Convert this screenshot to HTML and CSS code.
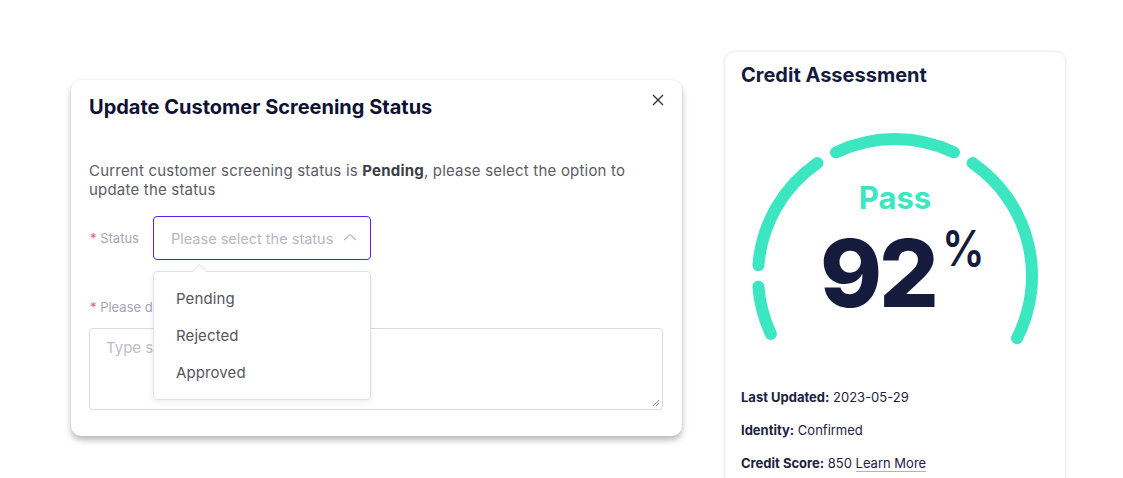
FILE: index.html
```html
<!DOCTYPE html>
<html lang="en">
<head>
<meta charset="utf-8">
<title>Screening</title>
<link rel="stylesheet" href="styles.css">
</head>
<body>
<div class="page">
  <section class="modal">
    <h2 class="modal-title">Update Customer Screening Status</h2>
    <button class="close" aria-label="Close">
      <svg width="12" height="12" viewBox="0 0 12 12"><path d="M1 1L11 11M11 1L1 11" stroke="#2b2d3a" stroke-width="1.3" fill="none"/></svg>
    </button>
    <p class="intro">Current customer screening status is <b>Pending</b>, please select the option to update the status</p>
    <div class="row">
      <label class="label"><span class="req">*</span> Status</label>
      <div class="select-wrap">
        <div class="select">
          <span class="placeholder">Please select the status</span>
          <svg class="chev" width="14" height="8" viewBox="0 0 14 8"><path d="M1 7L7 1.5L13 7" stroke="#b9b9c8" stroke-width="1.2" fill="none"/></svg>
        </div>
        <ul class="menu">
          <li>Pending</li>
          <li>Rejected</li>
          <li>Approved</li>
        </ul>
      </div>
    </div>
    <label class="label desc-label"><span class="req">*</span> Please describe the reason</label>
    <div class="textarea">
      <span class="placeholder">Type something here</span>
      <svg class="grip" width="8" height="8" viewBox="0 0 8 8"><path d="M7 1L1 7M7 4L4 7" stroke="#8c8c96" stroke-width="1" fill="none"/></svg>
    </div>
  </section>

  <section class="card">
    <h2 class="card-title">Credit Assessment</h2>
    <div class="gauge">
      <svg class="gauge-svg" width="300" height="220" viewBox="0 0 300 220">
        <g stroke="#3be6c1" stroke-width="12" stroke-linecap="round" fill="none">
          <path d="M25.84 200.90 A137 137 0 0 1 13.42 153.75"/>
          <path d="M13.42 132.25 A137 137 0 0 1 72.40 30.09"/>
          <path d="M91.02 19.35 A137 137 0 0 1 208.98 19.35"/>
          <path d="M227.60 30.09 A137 137 0 0 1 272.07 205.20"/>
        </g>
      </svg>
      <div class="gauge-text">
        <div class="pass">Pass</div>
        <div class="score"><span class="num">92</span><span class="pct">%</span></div>
      </div>
    </div>
    <ul class="facts">
      <li><b>Last Updated:</b> 2023-05-29</li>
      <li><b>Identity:</b> Confirmed</li>
      <li><b>Credit Score:</b> 850 <a class="more" href="#">Learn More</a></li>
    </ul>
  </section>
</div>
</body>
</html>
```

FILE: styles.css
```css
* { box-sizing: border-box; }
html, body { margin: 0; padding: 0; background: #fff; }
body {
  font-family: Inter, "Noto Sans", "Liberation Sans", sans-serif;
  color: #151b3d;
  overflow: hidden;
  height: 478px;
}
.page {
  display: flex;
  align-items: flex-start;
  padding: 52px 0 0 71px;
  gap: 43px;
}

/* Modal */
.modal {
  position: relative;
  width: 611px;
  height: 356px;
  margin-top: 28px;
  padding: 15px 19px 26px 18px;
  background: #fff;
  border-radius: 10px;
  box-shadow: 0 4px 6px rgba(0, 0, 0, 0.28), 0 0 2px rgba(0, 0, 0, 0.06);
}
.modal-title {
  margin: 0;
  font-size: 20px;
  line-height: 24px;
  font-weight: 700;
  color: #0f1133;
  letter-spacing: 0;
}
.close {
  position: absolute;
  top: 14px;
  right: 18px;
  width: 12px;
  height: 12px;
  padding: 0;
  border: 0;
  background: none;
  display: flex;
}
.intro {
  margin: 42px 0 0;
  font-size: 15px;
  line-height: 19px;
  letter-spacing: 0.2px;
  color: #5c5c66;
}
.intro b { color: #3d3d47; font-weight: 700; }
.row {
  display: flex;
  align-items: flex-start;
  margin-top: 17px;
}
.label {
  display: block;
  font-size: 13px;
  line-height: 18px;
  color: #a5a6b6;
}
.row .label { width: 64px; padding-top: 13px; padding-left: 1px; }
.req { color: #f2567a; }
.select-wrap { position: relative; }
.select {
  width: 218px;
  height: 44px;
  border: 1px solid #5a1ff0;
  border-radius: 4px;
  display: flex;
  align-items: center;
  justify-content: space-between;
  padding: 0 13px 0 17px;
}
.placeholder {
  font-size: 14.5px;
  color: #b6b7c6;
}
.chev { margin-top: -2px; }
.menu {
  position: absolute;
  top: 55px;
  left: 0;
  width: 218px;
  margin: 0;
  padding: 8px 0;
  list-style: none;
  background: #fff;
  border: 1px solid #dedfe8;
  border-radius: 4px;
  box-shadow: 0 2px 6px rgba(40, 40, 80, 0.08);
  z-index: 2;
}
.menu::before {
  content: "";
  position: absolute;
  top: -6px;
  left: 40px;
  width: 10px;
  height: 10px;
  background: #fff;
  border-left: 1px solid #e4e5ee;
  border-top: 1px solid #e4e5ee;
  transform: rotate(45deg);
}
.menu li {
  padding: 0 22px;
  height: 37px;
  line-height: 37px;
  font-size: 15px;
  letter-spacing: 0.1px;
  color: #55555e;
}
.desc-label { margin-top: 38px; padding-left: 1px; }
.textarea {
  position: relative;
  margin-top: 12px;
  width: 574px;
  height: 82px;
  border: 1px solid #d8d9e4;
  border-radius: 4px;
  padding: 8px 16px;
}
.textarea .placeholder { color: #bdbdc9; font-size: 15px; }
.grip { position: absolute; right: 2px; bottom: 2px; }

/* Card */
.card {
  width: 340px;
  height: 460px;
  padding: 11px 16px 0;
  background: #fff;
  border-radius: 10px;
  box-shadow: 0 0 4px rgba(0, 0, 0, 0.14);
}
.card-title {
  margin: 0;
  font-size: 20px;
  line-height: 24px;
  font-weight: 700;
  color: #151b3d;
}
.gauge {
  display: grid;
  justify-items: center;
  margin-top: 46px;
}
.gauge-svg, .gauge-text { grid-area: 1 / 1; }
.gauge-text {
  display: flex;
  flex-direction: column;
  align-items: center;
  padding-top: 47px;
}
.pass {
  font-size: 31px;
  line-height: 36px;
  font-weight: 700;
  color: #3be6c1;
}
.score {
  display: flex;
  align-items: flex-start;
  margin-top: 10px;
  padding-left: 8px;
}
.num {
  font-size: 94px;
  line-height: 1;
  font-weight: 800;
  letter-spacing: -3px;
  color: #151b3d;
}
.pct {
  font-size: 50px;
  line-height: 1;
  font-weight: 600;
  margin-left: 6px;
  margin-top: -3px;
  letter-spacing: 0;
  transform: scaleX(0.85);
  transform-origin: left top;
  width: 36px;
  color: #151b3d;
}
.facts {
  list-style: none;
  margin: 34px 0 0;
  padding: 0;
}
.facts li {
  font-size: 13px;
  line-height: 20px;
  height: 33px;
  color: #1d2240;
}
.facts b { font-weight: 700; }
.more {
  color: #1d2240;
  text-decoration: none;
  border-bottom: 1px solid #b7a6f0;
}
```
